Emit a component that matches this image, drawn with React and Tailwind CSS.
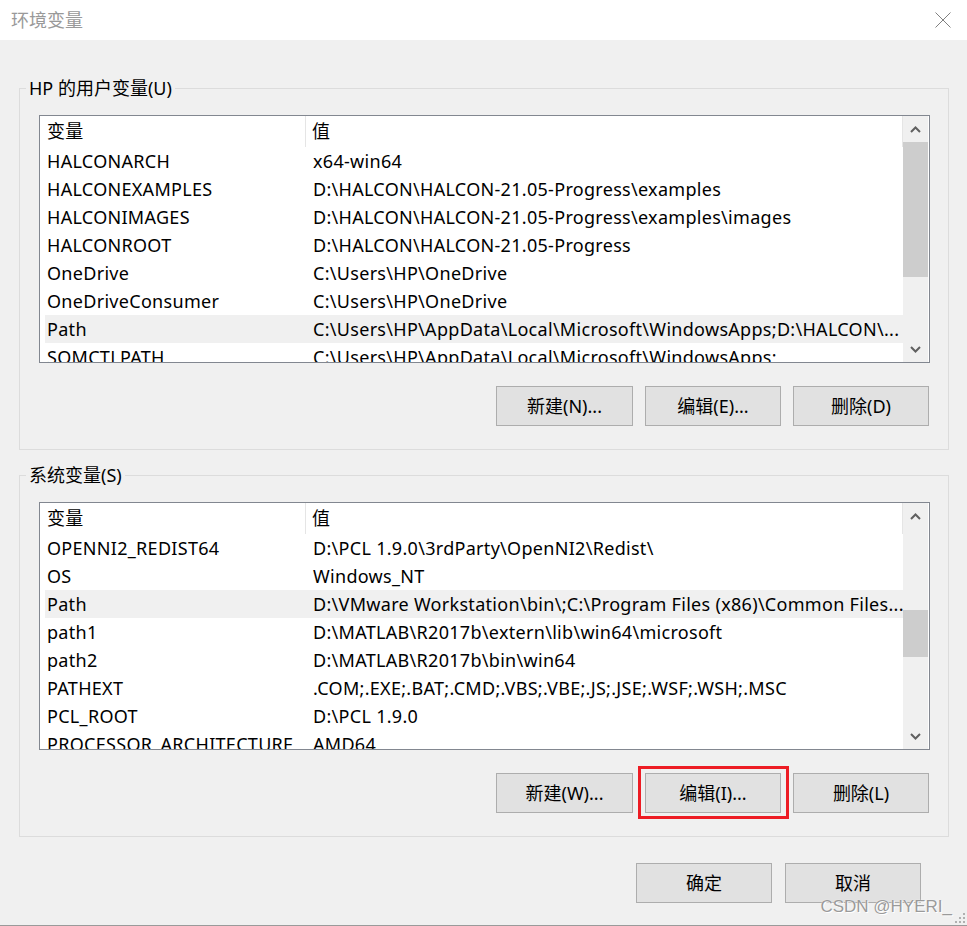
import React from 'react';

const font = { fontFamily: '"Noto Sans", "Noto Sans CJK SC", sans-serif' };

const userVars = [
    ['HALCONARCH', 'x64-win64'],
    ['HALCONEXAMPLES', 'D:\\HALCON\\HALCON-21.05-Progress\\examples'],
    ['HALCONIMAGES', 'D:\\HALCON\\HALCON-21.05-Progress\\examples\\images'],
    ['HALCONROOT', 'D:\\HALCON\\HALCON-21.05-Progress'],
    ['OneDrive', 'C:\\Users\\HP\\OneDrive'],
    ['OneDriveConsumer', 'C:\\Users\\HP\\OneDrive'],
    ['Path', 'C:\\Users\\HP\\AppData\\Local\\Microsoft\\WindowsApps;D:\\HALCON\\...'],
    ['SOMCTLPATH', 'C:\\Users\\HP\\AppData\\Local\\Microsoft\\WindowsApps;'],
];

const sysVars = [
    ['OPENNI2_REDIST64', 'D:\\PCL 1.9.0\\3rdParty\\OpenNI2\\Redist\\'],
    ['OS', 'Windows_NT'],
    ['Path', 'D:\\VMware Workstation\\bin\\;C:\\Program Files (x86)\\Common Files...'],
    ['path1', 'D:\\MATLAB\\R2017b\\extern\\lib\\win64\\microsoft'],
    ['path2', 'D:\\MATLAB\\R2017b\\bin\\win64'],
    ['PATHEXT', '.COM;.EXE;.BAT;.CMD;.VBS;.VBE;.JS;.JSE;.WSF;.WSH;.MSC'],
    ['PCL_ROOT', 'D:\\PCL 1.9.0'],
    ['PROCESSOR_ARCHITECTURE', 'AMD64'],
];

function Chevron({ up }) {
    return (
        <svg width="11" height="7" viewBox="0 0 11 7">
            <path
                d={up ? 'M1 6L5.5 1.5L10 6' : 'M1 1L5.5 5.5L10 1'}
                fill="none"
                stroke="#606060"
                strokeWidth="2"
            />
        </svg>
    );
}

function VarList({ rows, thumbClass }) {
    return (
        <div className="ml-[19px] mt-[15px] w-[891px] h-[248px] border border-[#828790] bg-white flex overflow-hidden">
            <div className="flex-1 min-w-0 flex flex-col tracking-[0.3px]">
                {/* header */}
                <div className="h-[31px] shrink-0 flex items-center">
                    <div className="w-[266px] h-full pl-[7px] flex items-center border-r border-[#e5e5e5]">变量</div>
                    <div className="flex-1 h-full pl-[6px] flex items-center border-r border-[#e5e5e5]">值</div>
                </div>
                {rows.map(([name, value]) => (
                    <div
                        key={name}
                        className={`h-[28px] shrink-0 flex items-center ml-[5px] ${name === 'Path' ? 'bg-[#f0f0f0]' : ''}`}
                    >
                        <div className="w-[261px] pl-[2px] whitespace-nowrap overflow-hidden">{name}</div>
                        <div className="flex-1 pl-[7px] whitespace-nowrap overflow-hidden">{value}</div>
                    </div>
                ))}
            </div>
            {/* scrollbar */}
            <div className="w-[25px] shrink-0 bg-[#f0f0f0] flex flex-col mr-[1px]">
                <div className="h-[26px] flex items-center justify-center">
                    <Chevron up />
                </div>
                <div className="flex-1 relative">
                    <div className={`absolute left-0 right-0 bg-[#cdcdcd] ${thumbClass}`}></div>
                </div>
                <div className="h-[26px] flex items-center justify-center">
                    <Chevron />
                </div>
            </div>
        </div>
    );
}

function Button({ children, className = 'w-[136px]' }) {
    return (
        <div className={`h-[40px] bg-[#e1e1e1] border border-[#adadad] flex items-center justify-center ${className}`}>
            {children}
        </div>
    );
}

function Group({ title, children }) {
    return (
        <fieldset className="ml-[19px] w-[930px] border border-[#dcdcdc]">
            <legend className="ml-[6px] px-[3px] leading-[24px]">{title}</legend>
            {children}
        </fieldset>
    );
}

export default function App() {
    return (
        <div className="w-[967px] h-[926px] bg-[#f0f0f0] text-[18px] text-black relative overflow-hidden border-b border-[#9a9a9a]" style={font}>
            {/* title bar */}
            <div className="h-[40px] bg-white flex items-center justify-between pl-[11px] pr-[16px]">
                <span className="text-[#999999] leading-none">环境变量</span>
                <svg width="16" height="16" viewBox="0 0 16 16">
                    <path d="M0.5 0.5L15.5 15.5M15.5 0.5L0.5 15.5" stroke="#808080" strokeWidth="1" />
                </svg>
            </div>

            <div className="pt-[36px]">
                <Group title="HP 的用户变量(U)">
                    <VarList rows={userVars} thumbClass="top-0 h-[135px]" />
                    <div className="flex justify-end gap-[12px] mr-[19px] mt-[23px] mb-[23px]">
                        <Button className="w-[137px]">新建(N)...</Button>
                        <Button>编辑(E)...</Button>
                        <Button>删除(D)</Button>
                    </div>
                </Group>

                <div className="h-[13px]"></div>

                <Group title="系统变量(S)">
                    <VarList rows={sysVars} thumbClass="top-[81px] h-[47px]" />
                    <div className="flex justify-end gap-[12px] mr-[19px] mt-[23px] mb-[23px]">
                        <Button className="w-[137px]">新建(W)...</Button>
                        <div className="relative">
                            <Button>编辑(I)...</Button>
                            <div className="absolute -left-[7px] -right-[8px] -top-[7px] -bottom-[6px] border-[3px] border-[#ed1c24]"></div>
                        </div>
                        <Button>删除(L)</Button>
                    </div>
                </Group>

                <div className="flex justify-end gap-[13px] mr-[46px] mt-[26px]">
                    <Button>确定</Button>
                    <Button>取消</Button>
                </div>
            </div>

            {/* watermark */}
            <div className="absolute right-[15px] bottom-[10px] text-[17px] leading-none text-[#9a9a9a]" style={{ fontFamily: '"Liberation Sans", sans-serif', textShadow: '0 0 1px #fff, 1px 1px 0 #fff' }}>
                CSDN @HYERI_
            </div>
            <div className="absolute right-[2px] bottom-[2px] grid grid-cols-3 gap-[2px]">
                <span className="w-[2px] h-[2px]"></span>
                <span className="w-[2px] h-[2px]"></span>
                <span className="w-[2px] h-[2px] bg-[#b0b0b0]"></span>
                <span className="w-[2px] h-[2px]"></span>
                <span className="w-[2px] h-[2px] bg-[#b0b0b0]"></span>
                <span className="w-[2px] h-[2px] bg-[#b0b0b0]"></span>
                <span className="w-[2px] h-[2px] bg-[#b0b0b0]"></span>
                <span className="w-[2px] h-[2px] bg-[#b0b0b0]"></span>
                <span className="w-[2px] h-[2px] bg-[#b0b0b0]"></span>
            </div>
        </div>
    );
}
